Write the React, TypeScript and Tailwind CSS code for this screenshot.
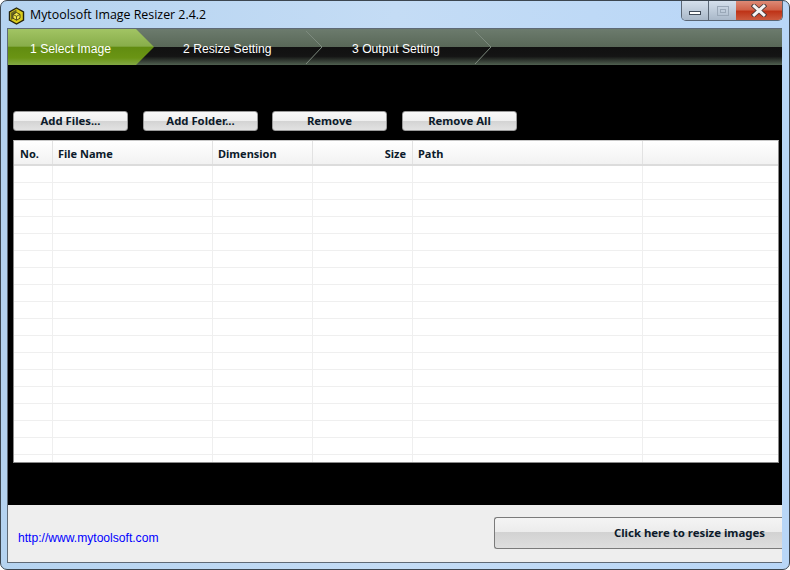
const steps = [
  { label: "1 Select Image", width: "w-[146px]", left: "left-[22px]", active: true },
  { label: "2 Resize Setting", width: "w-[169px]", left: "left-[29px]", active: false },
  { label: "3 Output Setting", width: "w-[169px]", left: "left-[29px]", active: false },
];

const buttons = [
  { label: "Add Files...", margin: "" },
  { label: "Add Folder...", margin: "ml-[15px]" },
  { label: "Remove", margin: "ml-[14px]" },
  { label: "Remove All", margin: "ml-[15px]" },
];

const columns = [
  { label: "No.", width: "w-[39px]", align: "text-left pl-[6px]" },
  { label: "File Name", width: "w-[160px]", align: "text-left pl-[5px]" },
  { label: "Dimension", width: "w-[100px]", align: "text-left pl-[5px]" },
  { label: "Size", width: "w-[100px]", align: "text-right pr-[6px]" },
  { label: "Path", width: "w-[230px]", align: "text-left pl-[5px]" },
  { label: "", width: "flex-1", align: "text-left" },
];

const rows = Array.from({ length: 18 }, (_, i) => i);

function AppIcon() {
  return (
    <svg width="17" height="18" viewBox="0 0 17 18" className="ml-[1px] shrink-0">
      <path d="M8.5 1 L15.5 5 V13 L8.5 17 L1.5 13 V5 Z" fill="#d9cb1c" stroke="#26240c" strokeWidth="1.4" />
      <path d="M3 5.8 L8.5 2.6 L8.5 6 L5.6 7.7 L5.6 11.5 L3 13 Z" fill="#6d6a22" />
      <path d="M8.5 5.5 L12 7.4 V11.2 L8.5 13.2 L5 11.2 V7.4 Z" fill="#f2e94a" stroke="#3d3a14" strokeWidth="0.9" />
      <path d="M5 7.4 L8.5 9.3 L12 7.4 M8.5 9.3 V13.2" fill="none" stroke="#3d3a14" strokeWidth="0.8" />
    </svg>
  );
}

function CloseGlyph() {
  return (
    <svg width="16" height="13" viewBox="0 0 16 13">
      <path d="M3 2 L13 11 M13 2 L3 11" stroke="#4a3a3a" strokeWidth="4.6" strokeLinecap="square" />
      <path d="M3.2 2.2 L12.8 10.8 M12.8 2.2 L3.2 10.8" stroke="#f4f4f4" strokeWidth="3" strokeLinecap="square" />
    </svg>
  );
}

function Chevron() {
  return (
    <svg width="18" height="36" viewBox="0 0 18 36" className="absolute right-0 top-0">
      <path d="M1 2 L17 18 L1 35" fill="none" stroke="#7d8a7e" strokeWidth="1" />
    </svg>
  );
}

function ActiveArrow() {
  return (
    <svg width="146" height="36" viewBox="0 0 146 36" className="absolute left-0 top-0">
      <defs>
        <linearGradient id="active" x1="0" y1="0" x2="0" y2="1">
          <stop offset="0" stopColor="#a2c464" />
          <stop offset="0.48" stopColor="#88ad4a" />
          <stop offset="0.5" stopColor="#618c10" />
          <stop offset="0.8" stopColor="#6a9414" />
          <stop offset="1" stopColor="#82a844" />
        </linearGradient>
      </defs>
      <path d="M0 0 H128 L146 18 L128 36 H0 Z" fill="url(#active)" />
    </svg>
  );
}

export default function App() {
  return (
    <div className="flex h-[570px] w-[790px] flex-col overflow-hidden rounded-[7px] border border-[#3c4650] bg-gradient-to-r from-[#b5d3f0] via-[#c4dcf5] to-[#b8d6f7] pt-0 pr-[7px] pb-[6px] pl-[6px] font-['Liberation_Sans',sans-serif]">
      <div className="relative flex h-[27px] shrink-0 items-center pt-[2px]">
        <AppIcon />
        <span className="ml-[5px] font-['Open_Sans',sans-serif] text-[12.4px] text-black">Mytoolsoft Image Resizer 2.4.2</span>
        <div className="absolute right-[-1px] top-0 flex h-[20px] w-[102px] overflow-hidden rounded-b-[5px] border border-t-0 border-[#5a6675]">
          <div className="flex w-[27px] items-center justify-center border-r border-[#5a6675] bg-gradient-to-b from-[#d5e0ec] to-[#a9b8c9]">
            <div className="mt-[5px] h-[4px] w-[12px] border border-[#3f4a58] bg-white" />
          </div>
          <div className="flex w-[27px] items-center justify-center bg-gradient-to-b from-[#d5e0ec] to-[#a9b8c9]">
            <div className="flex h-[10px] w-[12px] items-center justify-center border border-[#9aa8b8]">
              <div className="h-[4px] w-[6px] border border-[#9aa8b8]" />
            </div>
          </div>
          <div className="flex flex-1 items-center justify-center bg-[linear-gradient(#dd8a76_0%,#d0634a_45%,#bf3418_55%,#cc5a3e_100%)]">
            <CloseGlyph />
          </div>
        </div>
      </div>

      <div className="flex min-h-0 flex-1 flex-col border-t border-b border-l border-[#5f6a76] bg-black">
        <div className="flex h-[36px] shrink-0 bg-[linear-gradient(#6c7b6d_0%,#596858_49%,#111_50%,#141414_76%,#506050_100%)]">
          {steps.map((step) => (
            <div key={step.label} className={`relative h-full ${step.width}`}>
              {step.active ? <ActiveArrow /> : <Chevron />}
              <span className={`absolute ${step.left} top-[13px] whitespace-nowrap text-[12.15px] leading-[14px] text-white`}>
                {step.label}
              </span>
            </div>
          ))}
        </div>

        <div className="mt-[46px] flex shrink-0 pl-[5px]">
          {buttons.map((b) => (
            <button
              key={b.label}
              className={`h-[20px] w-[115px] rounded-[3px] border border-[#9a9a9a] bg-[linear-gradient(#f8f8f8_0%,#efefef_50%,#d4d4d4_52%,#e2e2e2_100%)] font-['Noto_Sans',sans-serif] text-[11.3px] leading-none font-bold text-[#0c1a2a] ${b.margin}`}
            >
              {b.label}
            </button>
          ))}
        </div>

        <div className="mt-[9px] ml-[5px] flex h-[323px] w-[766px] shrink-0 flex-col overflow-hidden border border-[#8a8a8a] border-t-[#c8c8c8] bg-white">
          <div className="flex h-[25px] shrink-0 border-b-2 border-[#dcdcdc] bg-gradient-to-b from-white to-[#f2f2f2]">
            {columns.map((c) => (
              <div
                key={c.label || "blank"}
                className={`${c.width} ${c.align} border-r border-[#e2e2e2] font-['Noto_Sans',sans-serif] text-[11px] leading-[25px] font-bold text-[#0c1a2a] last:border-r-0`}
              >
                {c.label}
              </div>
            ))}
          </div>
          {rows.map((r) => (
            <div key={r} className="flex h-[17px] shrink-0 border-b border-[#efefef]">
              {columns.map((c) => (
                <div key={c.label || "blank"} className={`${c.width} border-r border-[#efefef] last:border-r-0`} />
              ))}
            </div>
          ))}
        </div>

        <div className="flex-1" />

        <div className="flex h-[57px] shrink-0 items-start justify-between bg-[#eeeeee]">
          <a className="mt-[26px] ml-[10px] text-[12.1px] leading-[14px] text-[#0000ff]">http://www.mytoolsoft.com</a>
          <button className="mt-[12px] h-[32px] w-[288px] rounded-l-[3px] border border-r-0 border-[#7a7a7a] bg-[linear-gradient(#f4f4f4_0%,#ececec_45%,#d2d2d2_47%,#dedede_100%)] pr-[17px] text-right font-['Noto_Sans',sans-serif] text-[11.4px] font-bold text-[#0c1a2a]">
            Click here to resize images
          </button>
        </div>
      </div>
    </div>
  );
}
